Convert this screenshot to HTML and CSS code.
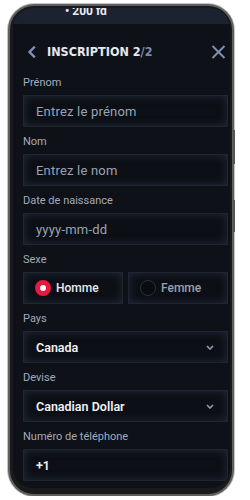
FILE: index.html
```html
<!DOCTYPE html>
<html lang="fr">
<head>
<meta charset="utf-8">
<title>Inscription 2/2</title>
<link rel="stylesheet" href="styles.css">
</head>
<body>
<div class="phone">
  <span class="side-btn side-btn-1"></span>
  <span class="side-btn side-btn-2"></span>
  <div class="screen">
    <div class="status"><span class="status-text">• 200 fd</span></div>
    <header class="header">
      <svg class="back" width="9" height="12" viewBox="0 0 9 12"><path d="M7 1.5 L2.5 6 L7 10.5" fill="none" stroke="#7f91b4" stroke-width="2.4" stroke-linecap="square"/></svg>
      <h1 class="title">INSCRIPTION 2<span class="title-dim">/2</span></h1>
      <svg class="close" width="15" height="14" viewBox="0 0 15 14"><path d="M1.5 1 L13.5 13 M13.5 1 L1.5 13" fill="none" stroke="#7f8fae" stroke-width="2"/></svg>
    </header>
    <form class="form">
      <div class="field">
        <label class="label">Prénom</label>
        <div class="input"><span class="placeholder">Entrez le prénom</span></div>
      </div>
      <div class="field">
        <label class="label">Nom</label>
        <div class="input"><span class="placeholder">Entrez le nom</span></div>
      </div>
      <div class="field">
        <label class="label">Date de naissance</label>
        <div class="input"><span class="placeholder">yyyy-mm-dd</span></div>
      </div>
      <div class="field">
        <label class="label">Sexe</label>
        <div class="radios">
          <div class="input radio-box"><span class="radio radio-on"></span><span class="radio-text">Homme</span></div>
          <div class="input radio-box"><span class="radio"></span><span class="radio-text radio-text-off">Femme</span></div>
        </div>
      </div>
      <div class="field">
        <label class="label">Pays</label>
        <div class="input select"><span class="value">Canada</span>
          <svg class="chev" width="8" height="5" viewBox="0 0 8 5"><path d="M1 1 L4 4 L7 1" fill="none" stroke="#8d9db7" stroke-width="1.6"/></svg></div>
      </div>
      <div class="field">
        <label class="label">Devise</label>
        <div class="input select"><span class="value">Canadian Dollar</span>
          <svg class="chev" width="8" height="5" viewBox="0 0 8 5"><path d="M1 1 L4 4 L7 1" fill="none" stroke="#8d9db7" stroke-width="1.6"/></svg></div>
      </div>
      <div class="field">
        <label class="label">Numéro de téléphone</label>
        <div class="input"><span class="value">+1</span></div>
      </div>
    </form>
  </div>
</div>
</body>
</html>
```
FILE: styles.css
```css
* { box-sizing: border-box; }
body {
  margin: 0;
  background: #ffffff;
  font-family: Roboto, "Noto Sans", sans-serif;
}
.phone {
  position: relative;
  margin: 4px 0 0 8px;
  width: 226px;
  height: 492px;
  border-radius: 26px;
  background: #1a1a1a;
  border: 2px solid #5f5f5f;
  box-shadow: 0 0 0 1px #c4c4c4;
  padding: 2px 2px 6px 3px;
}
.side-btn {
  position: absolute;
  right: -3px;
  width: 2px;
  background: #555;
}
.side-btn-1 { top: 124px; height: 34px; }
.side-btn-2 { top: 194px; height: 32px; }
.screen {
  height: 100%;
  border-radius: 20px;
  overflow: hidden;
  background: #0e1118;
}
.status {
  height: 16px;
  background: #1c2230;
  position: relative;
  overflow: hidden;
}
.status-text {
  position: absolute;
  left: 52px;
  top: -4px;
  line-height: 14px;
  color: #e9ecf1;
  font-weight: 700;
  font-size: 12px;
}
.header {
  height: 52px;
  padding: 3px 0 0 14px;
  display: flex;
  align-items: center;
}
.back { flex: none; }
.title {
  margin: 0 0 0 11px;
  font-family: "DejaVu Sans Condensed", "DejaVu Sans", sans-serif;
  font-stretch: condensed;
  font-weight: 700;
  font-size: 12.5px;
  color: #e6e9ef;
  flex: 1;
}
.title-dim { color: #7b8cad; }
.close { margin-right: 4px; flex: none; }
.form {
  padding: 0 2px 0 10px;
  display: flex;
  flex-direction: column;
  gap: 8px;
}
.field {
  display: flex;
  flex-direction: column;
}
.label {
  height: 14px;
  line-height: 14px;
  font-size: 11px;
  color: #a3abb9;
  margin-bottom: 5px;
}
.input {
  height: 32px;
  border: 1px solid #1f2531;
  background: #0c0f15;
  box-shadow: inset 0 0 10px rgba(62, 75, 100, 0.45);
  display: flex;
  align-items: center;
  padding: 0 12px;
  font-size: 12.5px;
}
.placeholder { color: #9aa3b4; font-size: 13px; letter-spacing: 0.2px; }
.value { color: #f0f2f6; font-weight: 600; }
.select { justify-content: space-between; padding-right: 13px; }
.radios {
  display: flex;
  gap: 5px;
}
.radio-box {
  flex: 1;
  padding-left: 11px;
  gap: 5px;
}
.radio {
  width: 16px;
  height: 16px;
  border-radius: 50%;
  border: 1px solid #2a303c;
  background: #0a0c11;
  flex: none;
}
.radio-on {
  border: 5px solid #e8183f;
  background: #ffffff;
}
.radio-text { color: #e8ebf0; font-weight: 500; font-size: 12px; }
.radio-text-off { color: #98a1b1; }
```
